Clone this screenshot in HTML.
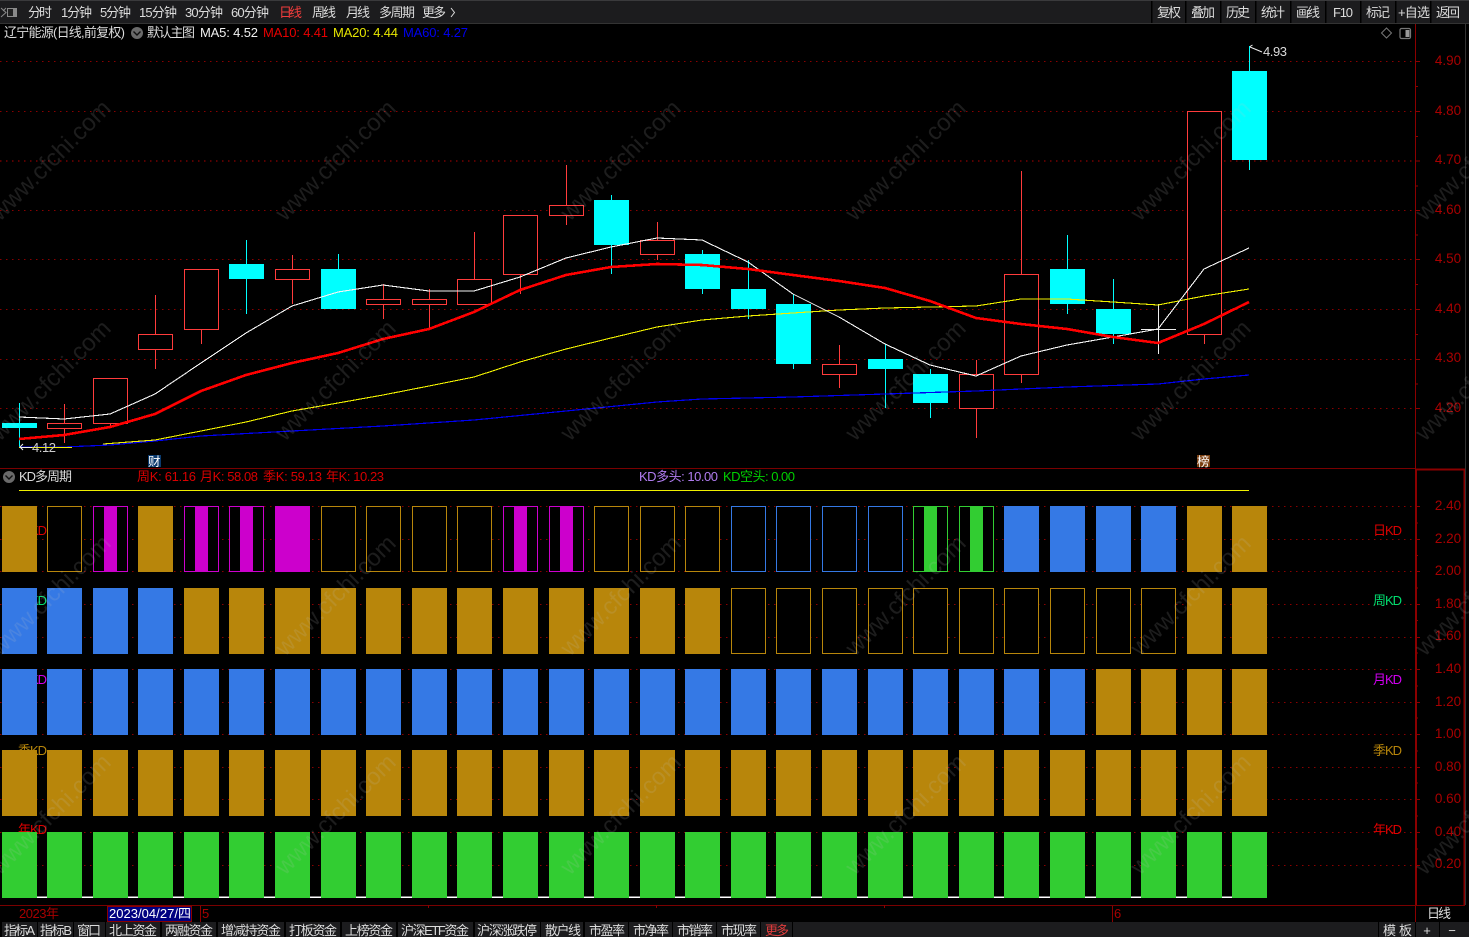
<!DOCTYPE html>
<html lang="zh-CN">
<head>
<meta charset="utf-8">
<title>辽宁能源 日线 KD多周期</title>
<style>
html,body{margin:0;padding:0;background:#000;width:1469px;height:937px;overflow:hidden}
svg{display:block;position:absolute;left:0;top:0}
text{font-family:"Liberation Sans","Noto Sans CJK SC",sans-serif;font-size:13px;fill:#dcdcdc}
.c{text-anchor:middle}
.ax{fill:#a80000;font-size:13.5px;text-anchor:middle}
.grid line{stroke:#8a0000;stroke-width:1;stroke-dasharray:1.5 4.5}
.gold{fill:#b8860b}
.blue{fill:#3579e5}
.green{fill:#32cd32}
.mag{fill:#cc00cc}
.og{fill:#000;stroke:#b8860b;stroke-width:1}
.ob{fill:#000;stroke:#3579e5;stroke-width:1}
.om{fill:#000;stroke:#cc00cc;stroke-width:1}
.oe{fill:#000;stroke:#32cd32;stroke-width:1}
.wick line{stroke-width:1}
.rc{fill:#000;stroke:#ff3c3c;stroke-width:1}
.cy{fill:#00ffff}
.ma{fill:none;stroke-linejoin:round;shape-rendering:crispEdges}
.wm text{font-size:24px;fill:#c0c0c0;fill-opacity:.15}
</style>
</head>
<body>
<svg width="1469" height="937" viewBox="0 0 1469 937" xmlns="http://www.w3.org/2000/svg">
<rect width="1469" height="937" fill="#000"/>

<!-- top toolbar -->
<rect x="0" y="0" width="1469" height="23" fill="#1c1c1e"/>
<rect x="0" y="0" width="1469" height="1" fill="#3a3a3c"/>
<rect x="0" y="23" width="1469" height="1" fill="#333"/>
<g fill="#000">
<rect x="1151" y="1" width="1.5" height="22"/><rect x="1185" y="1" width="1.5" height="22"/><rect x="1220" y="1" width="1.5" height="22"/><rect x="1255" y="1" width="1.5" height="22"/><rect x="1290" y="1" width="1.5" height="22"/><rect x="1325" y="1" width="1.5" height="22"/><rect x="1360" y="1" width="1.5" height="22"/><rect x="1395" y="1" width="1.5" height="22"/><rect x="1430" y="1" width="1.5" height="22"/>
</g>
<g fill="none" stroke="#8a8a8a" stroke-width="1">
<rect x="7.5" y="8.5" width="9" height="8" fill="#222"/>
<rect x="13" y="9" width="3" height="7" fill="#888" stroke="none"/>
<path d="M1 8l5 4.500-5 4.500M6 8l-3 3"/>
</g>
<text x="28" y="17" textLength="24">分时</text>
<text x="61" y="17" textLength="31">1分钟</text>
<text x="100" y="17" textLength="31">5分钟</text>
<text x="139" y="17" textLength="38">15分钟</text>
<text x="185" y="17" textLength="38">30分钟</text>
<text x="231" y="17" textLength="38">60分钟</text>
<text x="279" y="17" textLength="23" style="fill:#f03c3c">日线</text>
<text x="312" y="17" textLength="24">周线</text>
<text x="346" y="17" textLength="24">月线</text>
<text x="379" y="17" textLength="36">多周期</text>
<text x="422" y="17" textLength="24">更多</text>
<path d="M451 8l3.500 4.500-3.500 4.500" fill="none" stroke="#dcdcdc"/>

<text x="1157" y="17" textLength="24">复权</text>
<text x="1191" y="17" textLength="24">叠加</text>
<text x="1226" y="17" textLength="24">历史</text>
<text x="1261" y="17" textLength="24">统计</text>
<text x="1296" y="17" textLength="24">画线</text>
<text x="1333" y="17" textLength="20">F10</text>
<text x="1366" y="17" textLength="24">标记</text>
<text x="1398" y="17" textLength="32">+自选</text>
<text x="1436" y="17" textLength="24">返回</text>

<!-- legend -->
<text x="4" y="37" textLength="121">辽宁能源(日线,前复权)</text>
<circle cx="137" cy="33" r="6" fill="#6a6a6a"/>
<path d="M133.500 31.500l3.500 3.500 3.500-3.500" fill="none" stroke="#111" stroke-width="1.400"/>
<text x="147" y="37" textLength="48">默认主图</text>
<text x="200" y="37" textLength="58" style="fill:#f0f0f0">MA5: 4.52</text>
<text x="263" y="37" textLength="65" style="fill:#e60000">MA10: 4.41</text>
<text x="333" y="37" textLength="65" style="fill:#e6e600">MA20: 4.44</text>
<text x="403" y="37" textLength="65" style="fill:#0000f0">MA60: 4.27</text>
<path d="M1386.500 28l5 5-5 5-5-5z" fill="none" stroke="#777"/>
<rect x="1400" y="28.500" width="10.500" height="10" rx="1.500" fill="#000" stroke="#777" stroke-width="1.200"/>
<rect x="1405.500" y="30" width="4" height="7" fill="#999"/>

<!-- grid -->
<g class="grid">
<line x1="0" x2="1415" y1="61.500" y2="61.500"/><line x1="0" x2="1415" y1="111.500" y2="111.500"/><line x1="0" x2="1415" y1="161" y2="161" style="stroke:#b00000"/><line x1="0" x2="1415" y1="210.500" y2="210.500"/><line x1="0" x2="1415" y1="259.500" y2="259.500"/><line x1="0" x2="1415" y1="309.500" y2="309.500"/><line x1="0" x2="1415" y1="359.500" y2="359.500"/><line x1="0" x2="1415" y1="408.500" y2="408.500"/>
<line x1="0" x2="1415" y1="506.500" y2="506.500"/><line x1="0" x2="1415" y1="539.500" y2="539.500"/><line x1="0" x2="1415" y1="571.500" y2="571.500"/><line x1="0" x2="1415" y1="604.500" y2="604.500"/><line x1="0" x2="1415" y1="637.500" y2="637.500"/><line x1="0" x2="1415" y1="669.500" y2="669.500"/><line x1="0" x2="1415" y1="702.500" y2="702.500"/><line x1="0" x2="1415" y1="734.500" y2="734.500"/><line x1="0" x2="1415" y1="767.500" y2="767.500"/><line x1="0" x2="1415" y1="799.500" y2="799.500"/><line x1="0" x2="1415" y1="832.500" y2="832.500"/><line x1="0" x2="1415" y1="865.500" y2="865.500"/>
</g>

<!-- axes -->
<rect x="1415" y="24" width="1" height="445" fill="#8b0000"/>
<rect x="1415" y="469" width="2" height="436" fill="#8b0000"/>
<rect x="1415" y="468.500" width="50" height="2" fill="#8b0000"/>
<rect x="1463.500" y="469" width="1.500" height="436" fill="#8b0000"/>
<rect x="1465" y="24" width="1" height="881" fill="#333"/>
<rect x="0" y="468" width="1415" height="1" fill="#7a0000"/>
<rect x="0" y="905" width="1465" height="1" fill="#7a0000"/>
<rect x="1415" y="906" width="1" height="16" fill="#8b0000"/>
<g stroke="#8b0000" stroke-width="1">
<path d="M1416 61.500h4M1416 111.500h4M1416 161h4M1416 210.500h4M1416 259.500h4M1416 309.500h4M1416 359.500h4M1416 408.500h4M1416 86.500h2M1416 136.500h2M1416 186h2M1416 235h2M1416 284.500h2M1416 334.500h2M1416 384h2"/>
<path d="M1416 506.500h4M1416 539.500h4M1416 571.500h4M1416 604.500h4M1416 637.500h4M1416 669.500h4M1416 702.500h4M1416 734.500h4M1416 767.500h4M1416 799.500h4M1416 832.500h4M1416 865.500h4M1416 523h2M1416 555.500h2M1416 588h2M1416 620.500h2M1416 653h2M1416 686h2M1416 718h2M1416 751h2M1416 783h2M1416 816h2M1416 849h2"/>
</g>
<g>
<text class="ax" x="1448" y="65">4.90</text><text class="ax" x="1448" y="115">4.80</text><text class="ax" x="1448" y="164">4.70</text><text class="ax" x="1448" y="214">4.60</text><text class="ax" x="1448" y="263">4.50</text><text class="ax" x="1448" y="313">4.40</text><text class="ax" x="1448" y="362">4.30</text><text class="ax" x="1448" y="412">4.20</text>
<text class="ax" x="1448" y="510">2.40</text><text class="ax" x="1448" y="543">2.20</text><text class="ax" x="1448" y="575">2.00</text><text class="ax" x="1448" y="608">1.80</text><text class="ax" x="1448" y="640">1.60</text><text class="ax" x="1448" y="673">1.40</text><text class="ax" x="1448" y="706">1.20</text><text class="ax" x="1448" y="738">1.00</text><text class="ax" x="1448" y="771">0.80</text><text class="ax" x="1448" y="803">0.60</text><text class="ax" x="1448" y="836">0.40</text><text class="ax" x="1448" y="868">0.20</text>
</g>

<!-- candle wicks -->
<g class="wick" stroke="#ff3c3c">
<line x1="64.500" x2="64.500" y1="404" y2="443"/><line x1="110.500" x2="110.500" y1="423" y2="427"/><line x1="155.500" x2="155.500" y1="295" y2="369"/><line x1="201.500" x2="201.500" y1="329" y2="344"/><line x1="292.500" x2="292.500" y1="255" y2="304"/><line x1="383.500" x2="383.500" y1="284" y2="319"/><line x1="429.500" x2="429.500" y1="289" y2="329"/><line x1="474.500" x2="474.500" y1="232" y2="304"/><line x1="520.500" x2="520.500" y1="274" y2="294"/><line x1="566.500" x2="566.500" y1="165" y2="225"/><line x1="657.500" x2="657.500" y1="222" y2="260"/><line x1="839.500" x2="839.500" y1="345" y2="388"/><line x1="976.500" x2="976.500" y1="360" y2="438"/><line x1="1021.500" x2="1021.500" y1="171" y2="383"/><line x1="1204.500" x2="1204.500" y1="334" y2="344"/>
</g>
<g class="wick" stroke="#00ffff">
<line x1="19.500" x2="19.500" y1="403" y2="447"/><line x1="246.500" x2="246.500" y1="240" y2="314"/><line x1="338.500" x2="338.500" y1="254" y2="309"/><line x1="611.500" x2="611.500" y1="195" y2="274"/><line x1="702.500" x2="702.500" y1="250" y2="294"/><line x1="748.500" x2="748.500" y1="260" y2="319"/><line x1="793.500" x2="793.500" y1="294" y2="369"/><line x1="885.500" x2="885.500" y1="344" y2="408"/><line x1="930.500" x2="930.500" y1="369" y2="418"/><line x1="1067.500" x2="1067.500" y1="235" y2="314"/><line x1="1113.500" x2="1113.500" y1="279" y2="344"/><line x1="1249.500" x2="1249.500" y1="46" y2="170"/>
</g>
<path d="M1158.500 304v50M1141 329.500h35" stroke="#eee" fill="none"/>

<!-- candle bodies -->
<g>
<rect class="cy" x="2" y="423" width="35" height="5"/>
<rect class="rc" x="47.500" y="423.500" width="34" height="5"/>
<rect class="rc" x="93.500" y="378.500" width="34" height="45"/>
<rect class="rc" x="138.500" y="334.500" width="34" height="15"/>
<rect class="rc" x="184.500" y="269.500" width="34" height="60"/>
<rect class="cy" x="229" y="264" width="35" height="15"/>
<rect class="rc" x="275.500" y="269.500" width="34" height="10"/>
<rect class="cy" x="321" y="269" width="35" height="40"/>
<rect class="rc" x="366.500" y="299.500" width="34" height="5"/>
<rect class="rc" x="412.500" y="299.500" width="34" height="5"/>
<rect class="rc" x="457.500" y="279.500" width="34" height="25"/>
<rect class="rc" x="503.500" y="215.500" width="34" height="59"/>
<rect class="rc" x="549.500" y="205.500" width="34" height="10"/>
<rect class="cy" x="594" y="200" width="35" height="45"/>
<rect class="rc" x="640.500" y="240.500" width="34" height="14"/>
<rect class="cy" x="685" y="254" width="35" height="35"/>
<rect class="cy" x="731" y="289" width="35" height="20"/>
<rect class="cy" x="776" y="304" width="35" height="60"/>
<rect class="rc" x="822.500" y="364.500" width="34" height="10"/>
<rect class="cy" x="868" y="359" width="35" height="10"/>
<rect class="cy" x="913" y="374" width="35" height="29"/>
<rect class="rc" x="959.500" y="374.500" width="34" height="34"/>
<rect class="rc" x="1004.500" y="274.500" width="34" height="100"/>
<rect class="cy" x="1050" y="269" width="35" height="35"/>
<rect class="cy" x="1096" y="309" width="35" height="25"/>
<rect class="rc" x="1187.500" y="111.500" width="34" height="223"/>
<rect class="cy" x="1232" y="71" width="35" height="89"/>
</g>

<!-- moving averages -->
<polyline class="ma" stroke="#0000f0" stroke-width="1.200" points="19,447 64,447 110,445 155,441 201,436 292,431 383,426 474,420 566,411 657,402 702,399 793,397 885,394 976,391 1067,387 1158,384 1204,379 1249,375"/>
<polyline class="ma" stroke="#f0f000" stroke-width="1.100" points="103,444 155,440 201,431 246,422 292,411 338,403 383,395 429,386 474,377 520,362 566,349 611,338 657,327 702,320 748,316 793,313 839,310 885,308 930,307 976,306 1021,299 1067,299 1113,302 1158,305 1204,296 1249,289"/>
<line x1="19" x2="72" y1="447.500" y2="447.500" stroke="#f0f000" stroke-width="1.100"/>
<polyline class="ma" stroke="#f5f5f5" stroke-width="1.100" points="19,417 64,419 110,414 155,394 201,363 246,333 292,306 338,292 383,285 429,291 474,291 520,277 566,258 611,247 657,238 702,240 748,262 793,294 839,317 885,344 930,365 976,376 1021,356 1067,345 1113,337 1158,329 1204,269 1249,248"/>
<polyline class="ma" stroke="#ff0000" stroke-width="2.600" points="19,439 64,435 110,427 155,414 201,391 246,375 292,363 338,353 383,339 429,329 474,312 520,290 566,275 611,267 657,264 702,265 748,269 793,275 839,281 885,288 930,301 976,318 1021,324 1067,329 1113,337 1158,343 1204,324 1249,302"/>

<!-- hi lo marks -->
<path d="M1250 46.500l2.500-1.500M1250 47l12 5" stroke="#eee" fill="none"/>
<text x="1263" y="56" textLength="24">4.93</text>
<path d="M23 444l-3 3 3 3M20 447.500h12" stroke="#eee" fill="none"/>
<text x="32" y="452" textLength="24" style="fill:#ccc">4.12</text>
<rect x="148" y="455" width="13" height="12" fill="#0a3a6e"/>
<text x="148" y="466" style="font-size:12.500px;fill:#fff">财</text>
<rect x="1197" y="455" width="13" height="12" fill="#7a3e10"/>
<text x="1197" y="466" style="font-size:12.500px;fill:#fff">榜</text>

<!-- indicator head -->
<circle cx="9" cy="477" r="6" fill="#6a6a6a"/>
<path d="M5.500 475.500l3.500 3.500 3.500-3.500" fill="none" stroke="#111" stroke-width="1.400"/>
<text x="19" y="481" textLength="53">KD多周期</text>
<text x="137" y="481" textLength="59" style="fill:#d80000">周K: 61.16</text>
<text x="200" y="481" textLength="58" style="fill:#d80000">月K: 58.08</text>
<text x="263" y="481" textLength="59" style="fill:#d80000">季K: 59.13</text>
<text x="326" y="481" textLength="58" style="fill:#d80000">年K: 10.23</text>
<text x="639" y="481" textLength="79" style="fill:#b07cf0">KD多头: 10.00</text>
<text x="723" y="481" textLength="72" style="fill:#00d000">KD空头: 0.00</text>
<line x1="19" x2="1249" y1="490.500" y2="490.500" stroke="#f0f000" stroke-width="1"/>

<!-- KD labels (partly covered by blocks) -->
<g>
<text x="18" y="535" textLength="29" style="fill:#e00000">日KD</text>
<text x="18" y="605" textLength="29" style="fill:#00e070">周KD</text>
<text x="18" y="684" textLength="29" style="fill:#d000f0">月KD</text>
<text x="18" y="755" textLength="29" style="fill:#b8860b">季KD</text>
<text x="18" y="834" textLength="29" style="fill:#e00000">年KD</text>
<text x="1373" y="535" textLength="29" style="fill:#e00000">日KD</text>
<text x="1373" y="605" textLength="29" style="fill:#00e070">周KD</text>
<text x="1373" y="684" textLength="29" style="fill:#d000f0">月KD</text>
<text x="1373" y="755" textLength="29" style="fill:#b8860b">季KD</text>
<text x="1373" y="834" textLength="29" style="fill:#e00000">年KD</text>
</g>
<rect x="2" y="896.500" width="1248" height="1.500" fill="#fff"/>

<!-- row 1 -->
<g>
<rect class="gold" x="2" y="506" width="35" height="66"/>
<rect class="og" x="47.500" y="506.500" width="34" height="65"/>
<rect class="om" x="93.500" y="506.500" width="34" height="65"/><rect class="mag" x="104" y="506" width="13" height="66"/>
<rect class="gold" x="138" y="506" width="35" height="66"/>
<rect class="om" x="184.500" y="506.500" width="34" height="65"/><rect class="mag" x="195" y="506" width="13" height="66"/>
<rect class="om" x="229.500" y="506.500" width="34" height="65"/><rect class="mag" x="240" y="506" width="13" height="66"/>
<rect class="mag" x="275" y="506" width="35" height="66"/>
<rect class="og" x="321.500" y="506.500" width="34" height="65"/>
<rect class="og" x="366.500" y="506.500" width="34" height="65"/>
<rect class="og" x="412.500" y="506.500" width="34" height="65"/>
<rect class="og" x="457.500" y="506.500" width="34" height="65"/>
<rect class="om" x="503.500" y="506.500" width="34" height="65"/><rect class="mag" x="514" y="506" width="13" height="66"/>
<rect class="om" x="549.500" y="506.500" width="34" height="65"/><rect class="mag" x="560" y="506" width="13" height="66"/>
<rect class="og" x="594.500" y="506.500" width="34" height="65"/>
<rect class="og" x="640.500" y="506.500" width="34" height="65"/>
<rect class="og" x="685.500" y="506.500" width="34" height="65"/>
<rect class="ob" x="731.500" y="506.500" width="34" height="65"/>
<rect class="ob" x="776.500" y="506.500" width="34" height="65"/>
<rect class="ob" x="822.500" y="506.500" width="34" height="65"/>
<rect class="ob" x="868.500" y="506.500" width="34" height="65"/>
<rect class="oe" x="913.500" y="506.500" width="34" height="65"/><rect class="green" x="924" y="506" width="13" height="66"/>
<rect class="oe" x="959.500" y="506.500" width="34" height="65"/><rect class="green" x="970" y="506" width="13" height="66"/>
<rect class="blue" x="1004" y="506" width="35" height="66"/>
<rect class="blue" x="1050" y="506" width="35" height="66"/>
<rect class="blue" x="1096" y="506" width="35" height="66"/>
<rect class="blue" x="1141" y="506" width="35" height="66"/>
<rect class="gold" x="1187" y="506" width="35" height="66"/>
<rect class="gold" x="1232" y="506" width="35" height="66"/>
</g>
<!-- row 2 -->
<g>
<rect class="blue" x="2" y="588" width="35" height="66"/><rect class="blue" x="47" y="588" width="35" height="66"/><rect class="blue" x="93" y="588" width="35" height="66"/><rect class="blue" x="138" y="588" width="35" height="66"/>
<rect class="gold" x="184" y="588" width="35" height="66"/><rect class="gold" x="229" y="588" width="35" height="66"/><rect class="gold" x="275" y="588" width="35" height="66"/><rect class="gold" x="321" y="588" width="35" height="66"/><rect class="gold" x="366" y="588" width="35" height="66"/><rect class="gold" x="412" y="588" width="35" height="66"/><rect class="gold" x="457" y="588" width="35" height="66"/><rect class="gold" x="503" y="588" width="35" height="66"/><rect class="gold" x="549" y="588" width="35" height="66"/><rect class="gold" x="594" y="588" width="35" height="66"/><rect class="gold" x="640" y="588" width="35" height="66"/><rect class="gold" x="685" y="588" width="35" height="66"/>
<rect class="og" x="731.500" y="588.500" width="34" height="65"/><rect class="og" x="776.500" y="588.500" width="34" height="65"/><rect class="og" x="822.500" y="588.500" width="34" height="65"/><rect class="og" x="868.500" y="588.500" width="34" height="65"/><rect class="og" x="913.500" y="588.500" width="34" height="65"/><rect class="og" x="959.500" y="588.500" width="34" height="65"/><rect class="og" x="1004.500" y="588.500" width="34" height="65"/><rect class="og" x="1050.500" y="588.500" width="34" height="65"/><rect class="og" x="1096.500" y="588.500" width="34" height="65"/><rect class="og" x="1141.500" y="588.500" width="34" height="65"/>
<rect class="gold" x="1187" y="588" width="35" height="66"/><rect class="gold" x="1232" y="588" width="35" height="66"/>
</g>
<!-- row 3 -->
<g class="blue">
<rect x="2" y="669" width="35" height="66"/><rect x="47" y="669" width="35" height="66"/><rect x="93" y="669" width="35" height="66"/><rect x="138" y="669" width="35" height="66"/><rect x="184" y="669" width="35" height="66"/><rect x="229" y="669" width="35" height="66"/><rect x="275" y="669" width="35" height="66"/><rect x="321" y="669" width="35" height="66"/><rect x="366" y="669" width="35" height="66"/><rect x="412" y="669" width="35" height="66"/><rect x="457" y="669" width="35" height="66"/><rect x="503" y="669" width="35" height="66"/><rect x="549" y="669" width="35" height="66"/><rect x="594" y="669" width="35" height="66"/><rect x="640" y="669" width="35" height="66"/><rect x="685" y="669" width="35" height="66"/><rect x="731" y="669" width="35" height="66"/><rect x="776" y="669" width="35" height="66"/><rect x="822" y="669" width="35" height="66"/><rect x="868" y="669" width="35" height="66"/><rect x="913" y="669" width="35" height="66"/><rect x="959" y="669" width="35" height="66"/><rect x="1004" y="669" width="35" height="66"/><rect x="1050" y="669" width="35" height="66"/>
</g>
<g class="gold">
<rect x="1096" y="669" width="35" height="66"/><rect x="1141" y="669" width="35" height="66"/><rect x="1187" y="669" width="35" height="66"/><rect x="1232" y="669" width="35" height="66"/>
</g>
<!-- row 4 -->
<g class="gold">
<rect x="2" y="750" width="35" height="66"/><rect x="47" y="750" width="35" height="66"/><rect x="93" y="750" width="35" height="66"/><rect x="138" y="750" width="35" height="66"/><rect x="184" y="750" width="35" height="66"/><rect x="229" y="750" width="35" height="66"/><rect x="275" y="750" width="35" height="66"/><rect x="321" y="750" width="35" height="66"/><rect x="366" y="750" width="35" height="66"/><rect x="412" y="750" width="35" height="66"/><rect x="457" y="750" width="35" height="66"/><rect x="503" y="750" width="35" height="66"/><rect x="549" y="750" width="35" height="66"/><rect x="594" y="750" width="35" height="66"/><rect x="640" y="750" width="35" height="66"/><rect x="685" y="750" width="35" height="66"/><rect x="731" y="750" width="35" height="66"/><rect x="776" y="750" width="35" height="66"/><rect x="822" y="750" width="35" height="66"/><rect x="868" y="750" width="35" height="66"/><rect x="913" y="750" width="35" height="66"/><rect x="959" y="750" width="35" height="66"/><rect x="1004" y="750" width="35" height="66"/><rect x="1050" y="750" width="35" height="66"/><rect x="1096" y="750" width="35" height="66"/><rect x="1141" y="750" width="35" height="66"/><rect x="1187" y="750" width="35" height="66"/><rect x="1232" y="750" width="35" height="66"/>
</g>
<!-- row 5 -->
<g class="green">
<rect x="2" y="832" width="35" height="66"/><rect x="47" y="832" width="35" height="66"/><rect x="93" y="832" width="35" height="66"/><rect x="138" y="832" width="35" height="66"/><rect x="184" y="832" width="35" height="66"/><rect x="229" y="832" width="35" height="66"/><rect x="275" y="832" width="35" height="66"/><rect x="321" y="832" width="35" height="66"/><rect x="366" y="832" width="35" height="66"/><rect x="412" y="832" width="35" height="66"/><rect x="457" y="832" width="35" height="66"/><rect x="503" y="832" width="35" height="66"/><rect x="549" y="832" width="35" height="66"/><rect x="594" y="832" width="35" height="66"/><rect x="640" y="832" width="35" height="66"/><rect x="685" y="832" width="35" height="66"/><rect x="731" y="832" width="35" height="66"/><rect x="776" y="832" width="35" height="66"/><rect x="822" y="832" width="35" height="66"/><rect x="868" y="832" width="35" height="66"/><rect x="913" y="832" width="35" height="66"/><rect x="959" y="832" width="35" height="66"/><rect x="1004" y="832" width="35" height="66"/><rect x="1050" y="832" width="35" height="66"/><rect x="1096" y="832" width="35" height="66"/><rect x="1141" y="832" width="35" height="66"/><rect x="1187" y="832" width="35" height="66"/><rect x="1232" y="832" width="35" height="66"/>
</g>

<!-- watermark overlay -->
<g class="wm">
<text transform="translate(0,222) rotate(-45)">www.cfchi.com</text>
<text transform="translate(285,222) rotate(-45)">www.cfchi.com</text>
<text transform="translate(570,222) rotate(-45)">www.cfchi.com</text>
<text transform="translate(855,222) rotate(-45)">www.cfchi.com</text>
<text transform="translate(1140,222) rotate(-45)">www.cfchi.com</text>
<text transform="translate(1425,222) rotate(-45)">www.cfchi.com</text>
<text transform="translate(0,442) rotate(-45)">www.cfchi.com</text>
<text transform="translate(285,442) rotate(-45)">www.cfchi.com</text>
<text transform="translate(570,442) rotate(-45)">www.cfchi.com</text>
<text transform="translate(855,442) rotate(-45)">www.cfchi.com</text>
<text transform="translate(1140,442) rotate(-45)">www.cfchi.com</text>
<text transform="translate(1425,442) rotate(-45)">www.cfchi.com</text>
<text transform="translate(0,657) rotate(-45)">www.cfchi.com</text>
<text transform="translate(285,657) rotate(-45)">www.cfchi.com</text>
<text transform="translate(570,657) rotate(-45)">www.cfchi.com</text>
<text transform="translate(855,657) rotate(-45)">www.cfchi.com</text>
<text transform="translate(1140,657) rotate(-45)">www.cfchi.com</text>
<text transform="translate(1425,657) rotate(-45)">www.cfchi.com</text>
<text transform="translate(0,876) rotate(-45)">www.cfchi.com</text>
<text transform="translate(285,876) rotate(-45)">www.cfchi.com</text>
<text transform="translate(570,876) rotate(-45)">www.cfchi.com</text>
<text transform="translate(855,876) rotate(-45)">www.cfchi.com</text>
<text transform="translate(1140,876) rotate(-45)">www.cfchi.com</text>
<text transform="translate(1425,876) rotate(-45)">www.cfchi.com</text>
</g>

<!-- time axis -->
<text x="19" y="918" textLength="40" style="fill:#a80000">2023年</text>
<rect x="107.500" y="906.500" width="84" height="15" fill="#000080" stroke="#8b0000"/>
<text x="109" y="918" textLength="82" style="fill:#fff">2023/04/27/四</text>
<rect x="200" y="906" width="1" height="16" fill="#8b0000"/>
<text x="202" y="918" style="fill:#a80000">5</text>
<rect x="1112" y="906" width="1" height="16" fill="#8b0000"/>
<text x="1114" y="918" style="fill:#a80000">6</text>
<path d="M428.500 905v3M656.500 905v3M884.500 905v3" stroke="#8b0000"/>
<text x="1427" y="918" textLength="24" style="fill:#dcdcdc">日线</text>

<!-- bottom bar -->
<rect x="0" y="922" width="1469" height="15" fill="#1c1c1e"/>
<g fill="#000">
<rect x="0" y="922" width="2" height="15"/><rect x="37" y="922" width="1" height="15"/><rect x="73" y="922" width="1" height="15"/><rect x="105" y="922" width="1" height="15"/><rect x="160" y="922" width="2" height="15"/><rect x="216" y="922" width="2" height="15"/><rect x="284" y="922" width="2" height="15"/><rect x="340" y="922" width="2" height="15"/><rect x="396" y="922" width="2" height="15"/><rect x="473" y="922" width="2" height="15"/><rect x="540" y="922" width="1" height="15"/><rect x="583" y="922" width="2" height="15"/><rect x="628" y="922" width="1" height="15"/><rect x="672" y="922" width="1" height="15"/><rect x="716" y="922" width="1" height="15"/><rect x="760" y="922" width="1" height="15"/><rect x="792" y="922" width="1" height="15"/><rect x="1378" y="922" width="1" height="15"/><rect x="1415" y="922" width="1" height="15"/><rect x="1439" y="922" width="1" height="15"/>
</g>
<text x="4" y="935" textLength="31">指标A</text>
<text x="40" y="935" textLength="32">指标B</text>
<text x="77" y="935" textLength="24">窗口</text>
<text x="109" y="935" textLength="48">北上资金</text>
<text x="165" y="935" textLength="48">两融资金</text>
<text x="221" y="935" textLength="60">增减持资金</text>
<text x="289" y="935" textLength="48">打板资金</text>
<text x="345" y="935" textLength="48">上榜资金</text>
<text x="401" y="935" textLength="68">沪深ETF资金</text>
<text x="477" y="935" textLength="60">沪深涨跌停</text>
<text x="545" y="935" textLength="36">散户线</text>
<text x="589" y="935" textLength="36">市盈率</text>
<text x="633" y="935" textLength="36">市净率</text>
<text x="677" y="935" textLength="36">市销率</text>
<text x="721" y="935" textLength="36">市现率</text>
<text x="765" y="935" textLength="24" style="fill:#e03c3c">更多</text>
<text x="1383" y="935" textLength="29">模 板</text>
<text x="1427" y="935" class="c">+</text>
<text x="1452" y="935" class="c">−</text>
</svg>
</body>
</html>
